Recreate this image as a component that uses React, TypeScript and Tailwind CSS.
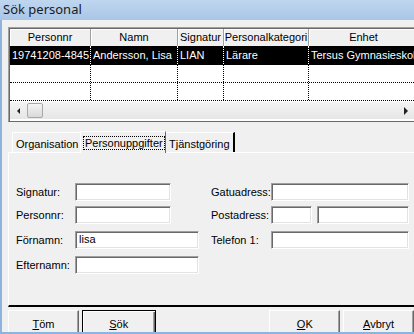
import React from "react";

const cols = [
  { title: "Personnr", w: 81 },
  { title: "Namn", w: 87 },
  { title: "Signatur", w: 46 },
  { title: "Personalkategori", w: 85 },
  { title: "Enhet", w: 110 },
];

const row = ["19741208-4845", "Andersson, Lisa", "LIAN", "Lärare", "Tersus Gymnasieskol"];

const sunken =
  "border border-t-[#a0a0a0] border-l-[#a0a0a0] border-r-white border-b-white shadow-[inset_1px_1px_0_#696969,inset_-1px_-1px_0_#e3e3e3] bg-white";

function Field({ w, value }: { w: string; value?: string }) {
  return (
    <div className={`${w} h-[18px] ${sunken} pl-[3px] leading-[15px] text-black`}>
      {value}
    </div>
  );
}

function Label({ text, w }: { text: string; w: string }) {
  return <div className={`${w} shrink-0 whitespace-nowrap`}>{text}</div>;
}

function Button({ label, u, w, def }: { label: string; u: string; w: string; def?: boolean }) {
  return (
    <div
      className={`${w} h-[26px] flex justify-center pt-[5px] border ${
        def
          ? "border-black shadow-[inset_1px_1px_0_#fff,inset_-1px_-1px_0_#696969,inset_-2px_-2px_0_#a0a0a0]"
          : "border-t-white border-l-white border-r-[#696969] border-b-[#696969] shadow-[inset_-1px_-1px_0_#a0a0a0]"
      } bg-[#f0f0f0]`}
    >
      <span>
        <span className="underline">{u}</span>
        {label}
      </span>
    </div>
  );
}

export default function App() {
  return (
    <div className="w-[414px] h-[334px] overflow-hidden bg-[#f0f0f0] font-['Liberation_Sans',Arial,sans-serif] text-[11px] text-black flex flex-col">
      <div className="h-[20px] shrink-0 bg-linear-to-b from-[#bfd6ef] to-[#a9c6e7] pl-[3px] flex items-center font-['Noto_Sans',sans-serif] text-[13px] text-[#1b1b1b]">
        Sök personal
      </div>

      <div className="flex-1 flex flex-col border-l-2 border-b-2 border-[#8cb4df] pl-[6px] overflow-hidden">
        {/* list */}
        <div className="mt-[7px] w-[410px] h-[95px] shrink-0 border-t border-l border-t-[#a0a0a0] border-l-[#a0a0a0] border-b border-b-[#696969] overflow-hidden">
          <div className="h-full border-t border-l border-[#696969] bg-white flex flex-col">
            <div className="flex h-[17px] shrink-0 bg-[#f0f0f0]">
              {cols.map((c) => (
                <div
                  key={c.title}
                  style={{ width: c.w }}
                  className="shrink-0 text-center leading-[16px] whitespace-nowrap border-r border-r-[#a0a0a0] shadow-[inset_1px_1px_0_#fff]"
                >
                  {c.title}
                </div>
              ))}
            </div>
            <div className="flex h-[19px] shrink-0 bg-black text-white border-b border-dotted border-black">
              {row.map((v, i) => (
                <div
                  key={i}
                  style={{ width: cols[i].w }}
                  className="shrink-0 pl-[2px] leading-[18px] whitespace-nowrap overflow-hidden border-r border-dotted border-white"
                >
                  {v}
                </div>
              ))}
            </div>
            {[0, 1].map((r) => (
              <div key={r} className="flex h-[18px] shrink-0 border-b border-dotted border-black">
                {cols.map((c) => (
                  <div
                    key={c.title}
                    style={{ width: c.w }}
                    className="shrink-0 border-r border-dotted border-black"
                  />
                ))}
              </div>
            ))}
            <div className="h-[17px] shrink-0 flex items-center bg-linear-to-b from-[#f3f3f3] to-[#e6e6e6] mt-[1px]">
              <div className="w-[17px] flex justify-center">
                <div className="w-0 h-0 border-y-[3px] border-y-transparent border-r-[3px] border-r-[#222]" />
              </div>
              <div className="w-[16px] h-[15px] rounded-[2px] border border-[#a8a8a8] bg-linear-to-b from-[#f4f4f4] to-[#d9d9d9]" />
              <div className="flex-1" />
              <div className="w-[17px] flex justify-center mr-[4px]">
                <div className="w-0 h-0 border-y-[4px] border-y-transparent border-l-[4px] border-l-[#222]" />
              </div>
            </div>
          </div>
        </div>

        {/* tabs */}
        <div className="mt-[8px] flex items-end h-[22px] shrink-0 pl-[4px]">
          <div className="flex-none h-[20px] w-[68px] overflow-hidden border-t border-l border-white pl-[3px] pt-[3px] whitespace-nowrap">Organisation</div>
          <div className="flex-none h-[22px] w-[86px] border-t border-l border-white border-r border-r-[#696969] bg-[#f0f0f0] pl-[2px] pt-[3px] relative z-10 mb-[-1px] whitespace-nowrap overflow-hidden">
            <span className="inline-block border border-dotted border-black px-[1px] leading-[12px]">Personuppgifter</span>
          </div>
          <div className="flex-none h-[20px] w-[69px] overflow-hidden border-t border-white border-r-2 border-r-black pl-[3px] pt-[3px] whitespace-nowrap">Tjänstgöring</div>
        </div>

        <div className="h-[155px] shrink-0 border-t border-l border-white border-b-2 border-b-black pt-[30px] pl-[7px] flex flex-col">
          <div className="flex h-[18px] items-center">
            <Label text="Signatur:" w="w-[59px]" />
            <Field w="w-[96px]" />
            <div className="w-[40px]" />
            <Label text="Gatuadress:" w="w-[60px]" />
            <Field w="w-[138px]" />
          </div>
          <div className="flex h-[18px] items-center mt-[5px]">
            <Label text="Personnr:" w="w-[59px]" />
            <Field w="w-[96px]" />
            <div className="w-[40px]" />
            <Label text="Postadress:" w="w-[60px]" />
            <Field w="w-[41px]" />
            <div className="w-[5px]" />
            <Field w="w-[92px]" />
          </div>
          <div className="flex h-[18px] items-center mt-[7px]">
            <Label text="Förnamn:" w="w-[59px]" />
            <Field w="w-[124px]" value="lisa" />
            <div className="w-[12px]" />
            <Label text="Telefon 1:" w="w-[60px]" />
            <Field w="w-[138px]" />
          </div>
          <div className="flex h-[18px] items-center mt-[7px]">
            <Label text="Efternamn:" w="w-[59px]" />
            <Field w="w-[124px]" />
          </div>
        </div>

        <div className="mt-[3px] flex">
          <Button label="öm" u="T" w="w-[71px]" />
          <div className="w-[3px]" />
          <Button label="ök" u="S" w="w-[74px]" def />
          <div className="w-[114px]" />
          <Button label="K" u="O" w="w-[71px]" />
          <div className="w-[3px]" />
          <Button label="vbryt" u="A" w="w-[71px]" />
        </div>
      </div>
    </div>
  );
}
